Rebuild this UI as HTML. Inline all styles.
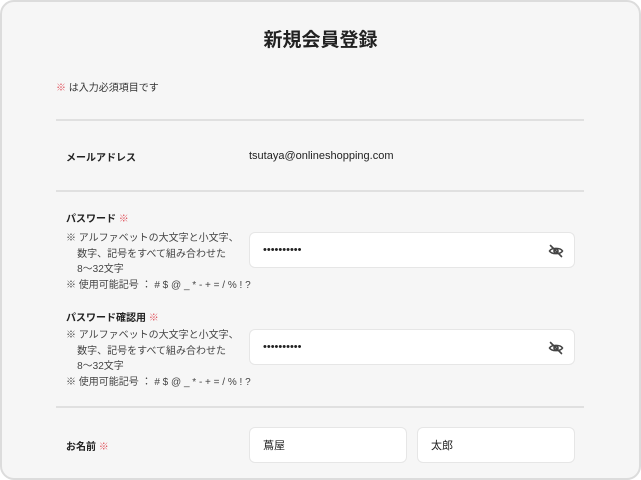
<!DOCTYPE html>
<html><head><meta charset="utf-8"><style>
*{margin:0;padding:0;box-sizing:border-box}
html,body{width:641px;height:480px;overflow:hidden;background:#fff}
body{font-family:"Liberation Sans","Noto Sans CJK JP",sans-serif;color:#222}
.frame{position:absolute;left:0;top:0;width:641px;height:480px;border:2px solid #dcdcdc;border-radius:14px;background:#f6f6f6}
.a{position:absolute;white-space:nowrap}
h1{position:absolute;left:0;width:641px;text-align:center;top:25px;font-size:19px;font-weight:bold;color:#222}
.red{color:#e0505a}
.hr{position:absolute;left:56px;width:528px;height:2px;background:#e0e0e0}
.lbl{font-size:10px;font-weight:bold;color:#222}
.note{font-size:10px;color:#444;line-height:15.5px}
.inp{position:absolute;background:#fff;border:1px solid #e6e6e6;border-radius:6px;font-size:11px;color:#222;padding-left:13px;display:flex;align-items:center}
.eye{position:absolute;right:10px;top:10px}
</style></head><body>
<div class="frame"></div>
<h1>新規会員登録</h1>
<div class="a" style="left:56px;top:79px;font-size:10px;color:#333"><span class="red">※</span> は入力必須項目です</div>
<div class="hr" style="top:119px"></div>
<div class="a lbl" style="left:66px;top:149px">メールアドレス</div>
<div class="a" style="left:249px;top:150px;font-size:11px;color:#222">tsutaya@onlineshopping.com</div>
<div class="hr" style="top:190px"></div>

<div class="a lbl" style="left:66px;top:210px">パスワード <span class="red">※</span></div>
<div class="a note" style="left:66px;top:231px">※ アルファベットの大文字と小文字、<br>&nbsp;&nbsp;&nbsp;&nbsp;数字、記号をすべて組み合わせた<br>&nbsp;&nbsp;&nbsp;&nbsp;8〜32文字<br>※ 使用可能記号 ： # $ @ _ * - + = / % ! ?</div>
<div class="inp" style="left:249px;top:232px;width:326px;height:36px">••••••••••
<svg class="eye" width="16" height="16" viewBox="0 0 16 16" fill="none" stroke="#444" stroke-width="1.6" stroke-linecap="round"><path d="M1.5 8C3.5 4.5 12.5 4.5 14.5 8C12.5 11.5 3.5 11.5 1.5 8Z"/><circle cx="8" cy="8" r="2"/><path d="M2.5 2.5L13.5 13.5"/></svg></div>

<div class="a lbl" style="left:66px;top:309px">パスワード確認用 <span class="red">※</span></div>
<div class="a note" style="left:66px;top:328px">※ アルファベットの大文字と小文字、<br>&nbsp;&nbsp;&nbsp;&nbsp;数字、記号をすべて組み合わせた<br>&nbsp;&nbsp;&nbsp;&nbsp;8〜32文字<br>※ 使用可能記号 ： # $ @ _ * - + = / % ! ?</div>
<div class="inp" style="left:249px;top:329px;width:326px;height:36px">••••••••••
<svg class="eye" width="16" height="16" viewBox="0 0 16 16" fill="none" stroke="#444" stroke-width="1.6" stroke-linecap="round"><path d="M1.5 8C3.5 4.5 12.5 4.5 14.5 8C12.5 11.5 3.5 11.5 1.5 8Z"/><circle cx="8" cy="8" r="2"/><path d="M2.5 2.5L13.5 13.5"/></svg></div>

<div class="hr" style="top:406px"></div>
<div class="a lbl" style="left:66px;top:438px">お名前 <span class="red">※</span></div>
<div class="inp" style="left:249px;top:427px;width:158px;height:36px">蔦屋</div>
<div class="inp" style="left:417px;top:427px;width:158px;height:36px">太郎</div>
</body></html>
